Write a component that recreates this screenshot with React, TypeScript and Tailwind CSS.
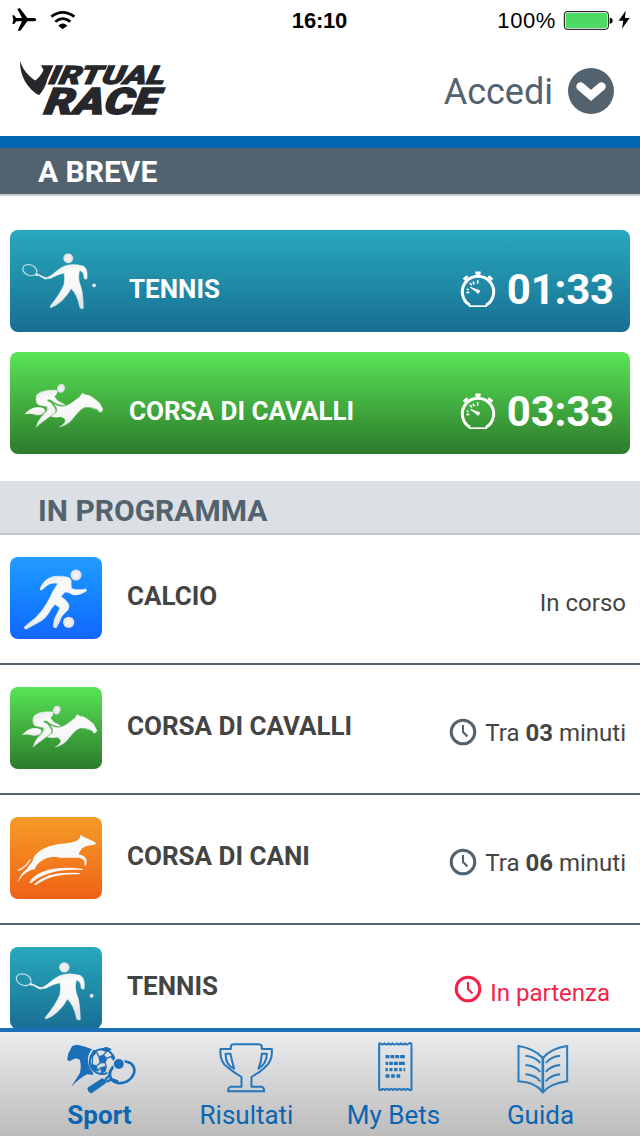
import type { ReactNode } from "react";

function Defs() {
  return (
    <svg className="absolute h-0 w-0" aria-hidden="true">
      <defs>
        <linearGradient id="silver" x1="0" y1="0" x2="0.25" y2="1">
          <stop offset="0" stopColor="#e2e4e6" />
          <stop offset="0.3" stopColor="#fbfbfb" />
          <stop offset="0.75" stopColor="#f6f6f6" />
          <stop offset="1" stopColor="#dfe2e4" />
        </linearGradient>
        <radialGradient id="ball" cx="0.5" cy="0.5" r="0.5">
          <stop offset="0" stopColor="#f7f7f7" />
          <stop offset="1" stopColor="#dde1e6" />
        </radialGradient>
      </defs>
    </svg>
  );
}

function TennisFigure() {
  return (
    <g>
      <circle cx="193" cy="97" r="15.500" fill="url(#ball)" />
      <circle cx="275" cy="182" r="6" fill="url(#ball)" />
      <ellipse cx="71" cy="134" rx="23" ry="16.500" transform="rotate(22 71 134)" fill="none" stroke="#c4e3ea" strokeWidth="3.600" />
      <path d="M90 148 L101 150 L123 162 M91 152 L96 145" fill="none" stroke="#e3f1f4" strokeWidth="4.500" />
      <path
        d="M103 152 Q118 159 128 157 C146 149 160 129 182 121 Q208 112 240 121 C251 126 254 139 253 159 Q249 168 243 158 Q244 139 229 135 C224 158 227 170 234 188 Q240 208 241 254 Q236 257 230 252 Q222 210 202 192 C192 210 182 222 172 231 Q155 247 137 252 Q133 249 139 243 C157 222 172 199 180 178 Q183 158 180 143 Q160 147 139 159 Q120 166 103 152Z"
        fill="url(#silver)"
        stroke="#eef2f3"
        strokeWidth="1.500"
      />
    </g>
  );
}

function HorseFigure() {
  return (
    <g fill="url(#silver)">
      <ellipse cx="183" cy="130" rx="11.500" ry="13.500" transform="rotate(20 183 130)" fill="url(#ball)" />
      <path d="M74 208 Q89 190 107 187 Q122 184 134 192 Q137 199 128 207 Q117 213 104 209 Q89 204 74 208Z" />
      <path
        d="M171 136 C149 134 119 137 110 151 Q106 161 110 174 Q114 181 122 181 L137 184 Q145 188 140 197 L124 216 Q112 230 109 246 Q119 236 130 229 L164 203 Q169 196 163 188 L153 174 L141 168 L143 162 Q153 162 163 172 Q178 182 195 180 L184 173 Q172 170 166 159 L163 154 Q173 147 171 136Z"
        stroke="#eef2ee"
        strokeWidth="1.500"
      />
      <path
        d="M164 178 Q178 188 196 183 C210 180 222 167 239 156 L247 144 L257 149 L267 151 Q282 159 298 173 L309 193 Q307 202 299 202 L291 193 Q281 192 271 187 L257 186 C242 190 230 207 217 223 Q204 240 178 246 Q194 237 196 227 Q194 217 181 215 Q165 219 152 214 L169 202 Q175 193 164 178Z"
        stroke="#eef2ee"
        strokeWidth="1"
      />
      <path d="M158 176 L167 188 Q173 196 167 203 L150 216" fill="none" stroke="#8fc08d" strokeWidth="1.600" />
      <path d="M138 184 Q149 187 141 199 L128 214 M271 187 L289 191 L297 199" fill="none" stroke="#8fc08d" strokeWidth="1.600" />
    </g>
  );
}

function SoccerFigure() {
  return (
    <g>
      <circle cx="228" cy="90" r="16.500" fill="url(#ball)" />
      <path
        d="M120 134 C126 113 141 98 164 94 Q183 92 204 97 Q216 101 213 116 L214 130 Q229 138 257 132 Q262 134 258 139 Q240 151 221 150 L204 142 Q195 138 190 146 L183 155 Q200 165 206 178 Q209 187 203 196 L189 209 Q182 217 179 229 L169 248 Q160 250 160 242 Q161 220 173 203 L180 189 L165 178 Q153 190 146 205 Q133 226 108 236 L79 252 Q71 252 74 245 L107 218 Q129 197 146 165 Q157 139 174 115 Q149 109 129 132 Q124 137 120 134Z"
        fill="url(#silver)"
        stroke="#e9edf2"
        strokeWidth="2"
      />
      <circle cx="206" cy="232" r="19" fill="#2165e7" />
      <circle cx="206" cy="232" r="17" fill="url(#ball)" />
    </g>
  );
}

function DogFigure() {
  return (
    <g fill="url(#silver)">
      <path d="M52 623 Q62 595 80 583 Q84 573 97 560 C101 532 136 513 177 507 Q209 505 230 498 L241 487 L239 479 L252 486 Q265 491 280 499 L288 505 Q286 511 274 510 L257 514 Q245 518 239 530 L236 538 Q253 541 259 553 Q262 563 257 573 Q252 572 254 560 Q248 548 232 548 Q189 550 160 545 Q141 546 124 558 Q111 566 104 583 L93 585 Q70 594 52 623Z" />
      <path d="M53 586 Q75 581 91 553" fill="none" stroke="#f9e9da" strokeWidth="4" />
      <path d="M87 623 C111 581 178 573 248 581 Q250 584 246 585 C181 582 126 594 94 625Z" />
      <path d="M102 628 C134 597 178 590 239 594 Q241 597 237 598 C184 597 144 604 107 631Z" />
    </g>
  );
}

function Wordmark() {
  return (
    <svg className="h-[76px] w-[176px]" viewBox="18 50 176 76" fill="#25272a" stroke="#25272a">
      <path d="M20 60.500 C21.500 67 27 75 35 80.500 Q40.500 77 43.500 70 L41 65.300 L53.500 65.300 L47.500 79 Q45.500 88 39 95.300 C28 89 19.500 77 20 60.500Z" stroke="none" />
      <g fontFamily="Roboto, sans-serif" fontWeight="900" fontStyle="italic">
        <text transform="translate(48 84) skewX(-12)" fontSize="25.500" strokeWidth="1" textLength="116" lengthAdjust="spacingAndGlyphs">IRTUAL</text>
        <text transform="translate(43.500 113.700) skewX(-10)" fontSize="36.500" strokeWidth="1.400" textLength="114" lengthAdjust="spacingAndGlyphs">RACE</text>
      </g>
      <path d="M46 85.700 H166" stroke="#fff" strokeWidth="1.300" />
    </svg>
  );
}

function StatusBar() {
  return (
    <div className="relative flex h-[40px] items-center justify-between px-[12px] font-['Liberation_Sans',sans-serif] text-[22px] leading-[40px] text-black">
      <div className="flex items-center gap-[13px]">
        <svg className="h-[24px] w-[25px]" viewBox="38 26 75 72" fill="#000">
          <path d="M39 48 L44 48 L51 56 L68 56 L54 28 L62 27 L84 56 L104 56 Q111 57 111 61 Q110 65 104 66 L84 66 L63 94 L55 94 L68 66 L51 66 L44 74 L39 74 L42 61Z" />
        </svg>
        <svg className="h-[20px] w-[26px]" viewBox="149 30 78 60" fill="none" stroke="#000" strokeWidth="8">
          <path d="M153 50 Q187 24 222 50" />
          <path d="M165 65 Q187 47 210 65" />
          <path d="M174 77 Q187 64 201 77 L187 88Z" fill="#000" stroke="none" />
        </svg>
      </div>
      <div className="absolute inset-x-0 top-[1px] pr-px text-center font-bold tracking-[-0.2px]">16:10</div>
      <div className="flex items-center">
        <span className="mr-[7px] pt-[2px] tracking-[0.6px]">100%</span>
        <svg className="mr-[-5px] h-[24px] w-[70px]" viewBox="400 24 210 72">
          <rect x="404" y="35" width="132" height="53" rx="8" fill="#fff" stroke="#000" strokeWidth="3" />
          <rect x="408" y="39" width="124" height="45" rx="4" fill="#4cd964" />
          <path d="M540 53 Q549 54 549 62 Q549 70 540 71Z" />
          <path d="M588 32 L567 62 L581 62 L577 86 L600 54 L586 54Z" />
        </svg>
      </div>
    </div>
  );
}

function Stopwatch() {
  return (
    <svg className="h-[37px] w-[36px] shrink-0" viewBox="60 150 108 111" fill="none" stroke="#fff">
      <path d="M90 253 A47 47 0 1 1 138 253" strokeWidth="9" />
      <path d="M87 255.500 H141" strokeWidth="5" />
      <path d="M106 156 H122 M114 156 V168" strokeWidth="9" />
      <path d="M71 176 L83 166 M145 166 L157 176" strokeWidth="9" />
      <path d="M91 199 L119 209 L115 217 Z" fill="#fff" strokeWidth="3" />
      <path d="M79 215 L88 214 M80 204 L86 206 M90 186 L96 193 M99 182 L103 190 M113 178 V188" strokeWidth="5" />
    </svg>
  );
}

function UpcomingCard({ name, time, tone, icon }: { name: string; time: string; tone: string; icon: ReactNode }) {
  return (
    <div className={`flex h-[102px] items-center rounded-[8px] bg-linear-to-b text-white ${tone}`}>
      <svg className="h-[102px] w-[100px] shrink-0" viewBox="30 30 300 306">{icon}</svg>
      <span className="ml-[19px] flex-1 pt-[15px] text-[26px] leading-[30px] font-bold">{name}</span>
      <div className="flex items-center gap-[11px] pt-[17px] pr-[16px]">
        <Stopwatch />
        <span className="text-[42px] leading-[50px] font-bold tracking-[-0.2px]">{time}</span>
      </div>
    </div>
  );
}

function Clock() {
  return (
    <svg className="h-[28px] w-[28px] shrink-0" viewBox="0 0 28 28" fill="none" stroke="currentColor">
      <circle cx="14" cy="14" r="11.800" strokeWidth="3" />
      <path d="M14 7 V14 L18.500 18.500" strokeWidth="2.100" />
    </svg>
  );
}

function EventRow({ name, tone, viewBox, icon, children }: { name: string; tone: string; viewBox: string; icon: ReactNode; children: ReactNode }) {
  return (
    <div className="flex h-[130px] shrink-0 items-start border-b-2 border-[#52626f] pt-[22px] pl-[10px] text-[#444]">
      <div className={`h-[82px] w-[92px] shrink-0 rounded-[8px] bg-linear-to-b ${tone}`}>
        <svg className="h-[82px] w-[92px]" viewBox={viewBox}>{icon}</svg>
      </div>
      <span className="ml-[25px] flex-1 pt-[24px] text-[26px] leading-[30px] font-bold">{name}</span>
      <div className="flex items-center pt-[31px] text-[24px] leading-[30px]">{children}</div>
    </div>
  );
}

function Countdown({ minutes }: { minutes: string }) {
  return (
    <div className="flex items-center pr-[14px]">
      <span className="mr-[8px] -mt-[2px] text-[#52626f]"><Clock /></span>
      <span>Tra <b>{minutes}</b> minuti</span>
    </div>
  );
}

function SportIcon() {
  return (
    <svg className="h-[52px] w-[72px]" viewBox="191.5 321 216 156" fill="none" stroke="#1b6fb8">
      <path d="M201 374 L204 356 L216 333 L231 329 Q252 332 276 343 Q265 354 263 371 Q263 385 270 401 Q280 413 279 420 L261 418 Q238 429 213 456 Q226 434 238 416 Q245 397 239 374 Q227 367 217 374 L208 379Z" fill="#1b6fb8" stroke="none" />
      <circle cx="306" cy="380" r="37" strokeWidth="6" />
      <path d="M296 365 L310 360 L320 370 L315 383 L300 384Z M277 366 L289 351 L281 345 L270 364Z M302 343 L319 350 L333 343 L318 337Z M276 388 L289 393 L292 408 L281 406 L271 393Z M304 397 L318 395 L316 408 L303 414Z M331 365 L340 359 L342 378Z" fill="#1b6fb8" strokeWidth="3" />
      <path d="M289 351 L296 365 M310 360 L319 350 M320 370 L331 365 M315 383 L318 395 M300 384 L289 393 M276 388 L277 366 M292 408 L304 397" strokeWidth="4" />
      <ellipse cx="366" cy="412" rx="39" ry="31" transform="rotate(-28 366 412)" fill="#dadbdd" stroke="#dadbdd" strokeWidth="14" />
      <ellipse cx="366" cy="412" rx="38" ry="30.500" transform="rotate(-28 366 412)" strokeWidth="8" />
      <path d="M331 405 L326 423 L315 434 M320 440 L335 433 L354 439" strokeWidth="7" />
      <path d="M263 459 L306 431 L319 438 L316 444 L273 474 Q264 472 263 459Z" fill="#1b6fb8" strokeWidth="3" />
      <circle cx="356" cy="387" r="19" fill="#dddedf" stroke="none" />
      <circle cx="356" cy="387" r="15" fill="#1b6fb8" stroke="none" />
    </svg>
  );
}

function TrophyIcon() {
  return (
    <svg className="h-[52px] w-[72px]" viewBox="2.5 66 216 156" fill="none" stroke="#2576ba" strokeWidth="6" strokeLinejoin="round">
      <path d="M62 87 V78 Q64 73 73 73 H144 Q153 73 155 79 V87 H185 C187 110 180 130 163 143 L145 158 Q132 165 124 171 V200 H155 Q162 202 162 214 H54 Q53 203 62 200 H94 V171 L77 160 L51 141 C35 130 29 110 31 87Z" />
      <path d="M46 101 H61 Q65 124 72 146 Q47 137 46 101Z M155 101 H170 Q170 130 145 146 Q154 124 155 101Z" />
    </svg>
  );
}

function TicketIcon() {
  return (
    <svg className="h-[52px] w-[72px]" viewBox="443.5 66 216 156" fill="none" stroke="#2576ba" strokeWidth="6" strokeLinejoin="round">
      <path d="M507 73 Q507 68 511 70 Q517 77 523 70 Q529 77 535 70 Q541 77 547 70 Q553 77 560 70 Q566 77 572 70 Q578 77 584 70 Q590 77 596 70 Q604 67 604 74 V207 Q604 212 599 210 Q592 204 586 210 Q580 204 574 210 Q568 204 561 210 Q555 204 549 210 Q543 204 536 210 Q530 204 524 210 Q518 204 512 210 Q506 210 507 206Z" />
      <g strokeWidth="10" stroke="#2472b7">
        <path d="M526 110 H584" strokeDasharray="12 3 11 3 12 3 14 3" />
        <path d="M526 130 H584" strokeDasharray="8 3 11 3 12 3 20 2" />
        <path d="M526 149 H585" strokeDasharray="7 5 9 5 10 5 8 5 6 3" />
        <path d="M526 168 H570" strokeDasharray="12 5 11 5 11 3" />
      </g>
    </svg>
  );
}

function BookIcon() {
  return (
    <svg className="h-[52px] w-[72px]" viewBox="224.5 306 216 156" fill="none" stroke="#2b7cbd" strokeWidth="6">
      <path d="M338 354 Q311 325 265 318 V424 Q316 426 338 457 Q361 430 411 424 V318 Q364 324 338 354Z" />
      <path d="M338 354 V457" strokeWidth="8" />
      <path d="M286 347 Q317 350 330 369 M286 375 Q317 378 330 396 M286 403 Q317 406 330 424 M390 347 Q361 350 347 369 M390 375 Q361 378 347 396 M390 403 Q361 406 347 424" />
    </svg>
  );
}

function Tab({ label, icon, active = false }: { label: string; icon: ReactNode; active?: boolean }) {
  return (
    <div className="flex w-[147px] flex-col items-center pt-[10px]">
      {icon}
      <span className={`mt-[3px] text-[26px] leading-[36px] whitespace-nowrap ${active ? "font-bold" : ""}`}>{label}</span>
    </div>
  );
}

const teal = "from-[#28a9bd] to-[#196f93]";
const green = "from-[#59e556] to-[#2d7b2b]";

export default function App() {
  return (
    <div className="flex h-[1136px] w-[640px] flex-col overflow-hidden bg-white font-[Roboto,sans-serif]">
      <Defs />
      <StatusBar />
      <header className="flex h-[108px] shrink-0 items-start justify-between border-b-12 border-[#0067b4] pt-[10px] pr-[26px] pl-[18px]">
        <Wordmark />
        <div className="flex items-center gap-[15px] pt-[18px]">
          <span className="pt-[2px] text-[36px] leading-[44px] text-[#52626f]">Accedi</span>
          <svg className="h-[46px] w-[46px]" viewBox="0 0 46 46" fill="none">
            <circle cx="23" cy="23" r="23" fill="#52626f" />
            <path d="M12.500 18.500 L23 27.500 L33.500 18.500" stroke="#fff" strokeWidth="8.500" strokeLinecap="round" strokeLinejoin="miter" />
          </svg>
        </div>
      </header>
      <main className="flex min-h-0 flex-1 flex-col overflow-hidden">
        <h2 className="h-[48px] shrink-0 border-b-2 border-[#c5c9d0] bg-[#52626f] pl-[38px] text-[30px] leading-[47px] font-bold text-white">A BREVE</h2>
        <div className="flex shrink-0 flex-col gap-[20px] px-[10px] pt-[34px] pb-[27px]">
          <UpcomingCard name="TENNIS" time="01:33" tone={teal} icon={<g transform="translate(22.3 22.5) scale(.945 .954)"><TennisFigure /></g>} />
          <UpcomingCard name="CORSA DI CAVALLI" time="03:33" tone={green} icon={<g transform="translate(0 9)"><HorseFigure /></g>} />
        </div>
        <h2 className="h-[54px] shrink-0 border-b-2 border-[#c3c6c9] bg-[#dcdfe3] pt-[7px] pl-[38px] text-[30px] leading-[45px] font-bold text-[#52626f]">IN PROGRAMMA</h2>
        <EventRow name="CALCIO" tone="from-[#229cff] to-[#1466ff]" viewBox="30 36 276 246" icon={<SoccerFigure />}>
          <span className="pr-[14px]">In corso</span>
        </EventRow>
        <EventRow name="CORSA DI CAVALLI" tone={green} viewBox="30 36 276 246" icon={<g transform="translate(-4.600 -19) scale(.956)"><HorseFigure /></g>}>
          <Countdown minutes="03" />
        </EventRow>
        <EventRow name="CORSA DI CANI" tone="from-[#f49b27] to-[#f06015]" viewBox="30 426 276 246" icon={<DogFigure />}>
          <Countdown minutes="06" />
        </EventRow>
        <EventRow name="TENNIS" tone={teal} viewBox="30 36 276 246" icon={<TennisFigure />}>
          <div className="flex items-center pr-[30px] text-[#f62148]">
            <span className="mr-[8px] -mt-[8px]"><Clock /></span>
            <span>In partenza</span>
          </div>
        </EventRow>
      </main>
      <nav className="flex h-[108px] shrink-0 border-t-4 border-[#1b6fb8] bg-linear-to-b from-[#ebecee] to-[#bcbcbc] px-[26px] text-[#0b66b2]">
        <Tab label="Sport" icon={<SportIcon />} active />
        <Tab label="Risultati" icon={<TrophyIcon />} />
        <Tab label="My Bets" icon={<TicketIcon />} />
        <Tab label="Guida" icon={<BookIcon />} />
      </nav>
    </div>
  );
}
